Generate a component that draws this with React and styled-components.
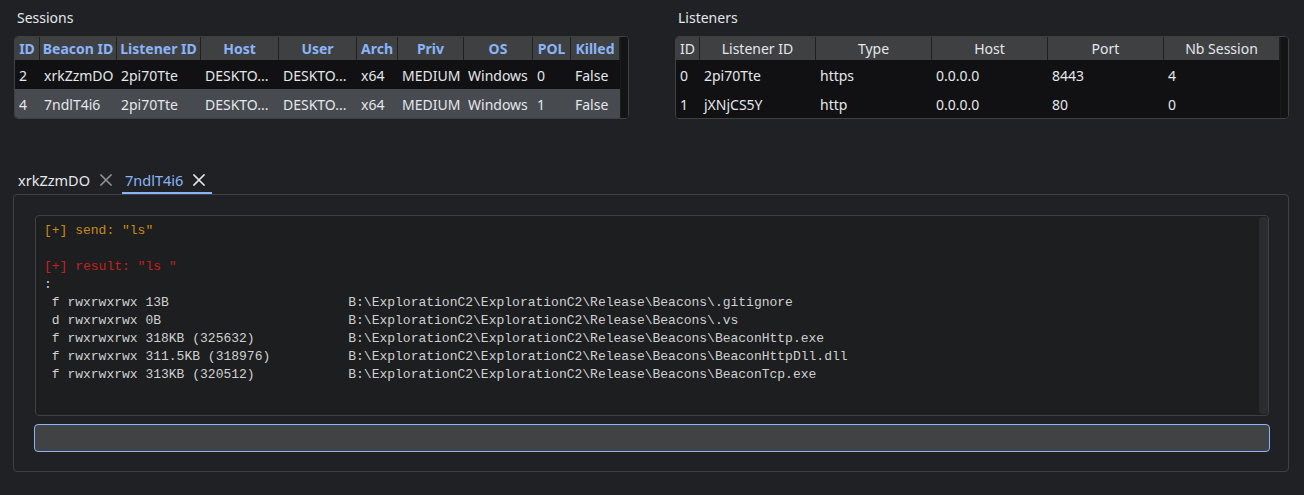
import React from "react";
import styled, { createGlobalStyle } from "styled-components";

const GlobalStyle = createGlobalStyle`
  html, body {
    margin: 0;
    padding: 0;
    background: #202124;
    color: #e4e7eb;
    font-family: "Noto Sans", "Open Sans", sans-serif;
  }
`;

const Page = styled.div`
  width: 1304px;
  height: 495px;
  background: #202124;
  box-sizing: border-box;
  overflow: hidden;
`;

const TopRow = styled.div`
  display: grid;
  grid-template-columns: 615px 614px;
  column-gap: 46px;
  padding: 0 15px 0 14px;
`;

const Panel = styled.section`
  display: flex;
  flex-direction: column;
`;

const PanelTitle = styled.div`
  font-size: 14px;
  line-height: 20px;
  margin: 8px 0 8px 3px;
  color: #e4e7eb;
`;

const TableBox = styled.div`
  border: 1px solid #3f4042;
  border-radius: 4px;
  overflow: hidden;
  display: grid;
  grid-template-columns: ${(p) => p.$cols};
  background: #111113;
`;

const HeadCell = styled.div`
  height: 23px;
  line-height: 23px;
  background: #3f4042;
  text-align: center;
  font-size: 14px;
  font-weight: ${(p) => (p.$hl ? 700 : 400)};
  color: ${(p) => (p.$hl ? "#8ab4f8" : "#e4e7eb")};
  border-right: 1px solid #202124;
  white-space: nowrap;
  overflow: hidden;
  &:last-of-type {
    border-right: none;
  }
`;

const Cell = styled.div`
  height: 29px;
  box-sizing: border-box;
  padding: 2px 2px 0 4px;
  line-height: 27px;
  font-size: 14px;
  white-space: nowrap;
  overflow: hidden;
  color: #e4e7eb;
  background: ${(p) => (p.$sel ? "#474a4f" : "#111113")};
`;

const ScrollTrack = styled.div`
  grid-row: 1 / span ${(p) => p.$rows};
  grid-column: -2 / -1;
  background: #141416;
  border-left: 1px solid #1a1b1d;
`;

const Tabs = styled.div`
  margin: 47px 15px 0 13px;
`;

const TabBar = styled.div`
  display: flex;
  align-items: stretch;
  height: 28px;
`;

const Tab = styled.div`
  display: flex;
  align-items: center;
  gap: 10px;
  padding: 0 7px 0 ${(p) => (p.$first ? 5 : 3)}px;
  margin-right: 3px;
  font-size: 14.5px;
  color: ${(p) => (p.$active ? "#8ab4f8" : "#e4e7eb")};
  box-shadow: ${(p) => (p.$active ? "inset 0 -2px 0 #8ab4f8" : "none")};
`;

const CloseIcon = ({ color }) => (
  <svg width="12" height="12" viewBox="0 0 12 12">
    <path d="M1 1 L11 11 M11 1 L1 11" stroke={color} strokeWidth="1.6" strokeLinecap="square" />
  </svg>
);

const Pane = styled.div`
  border: 1px solid #3f4042;
  border-radius: 4px;
  height: 278px;
  box-sizing: border-box;
  padding: 20px 18px 0 20px;
  display: flex;
  flex-direction: column;
  gap: 8px;
`;

const Console = styled.div`
  height: 201px;
  box-sizing: border-box;
  border: 1px solid #3f4042;
  border-radius: 4px;
  background: #1d1e20;
  display: flex;
  margin: 0 1px;
`;

const ConsoleText = styled.pre`
  flex: 1;
  margin: 0;
  padding: 6px 8px 4px;
  font-family: "Liberation Mono", "Courier New", monospace;
  font-size: 13px;
  line-height: 18px;
  color: #d0d0d0;
  overflow: hidden;
`;

const Line = styled.div`
  height: 18px;
  white-space: pre;
  color: ${(p) => p.$color || "#d0d0d0"};
`;

const ConsoleScroll = styled.div`
  width: 9px;
  margin: 1px 0 1px 0;
  border-radius: 4px;
  background: #2b2c2f;
`;

const CommandInput = styled.input`
  height: 28px;
  box-sizing: border-box;
  background: #414244;
  border: 1px solid #8ab4f8;
  border-radius: 4px;
  outline: none;
  color: #e4e7eb;
  font-family: "Liberation Mono", monospace;
  font-size: 13px;
  padding: 0 8px;
`;

const sessionCols = "25px 77px 84px 78px 78px 41px 66px 69px 38px 49px 8px";
const sessionHead = ["ID", "Beacon ID", "Listener ID", "Host", "User", "Arch", "Priv", "OS", "POL", "Killed"];
const sessions = [
  ["2", "xrkZzmDO", "2pi70Tte", "DESKTO...", "DESKTO...", "x64", "MEDIUM", "Windows", "0", "False"],
  ["4", "7ndlT4i6", "2pi70Tte", "DESKTO...", "DESKTO...", "x64", "MEDIUM", "Windows", "1", "False"],
];

const listenerCols = "24px 116px 116px 116px 116px 116px 8px";
const listenerHead = ["ID", "Listener ID", "Type", "Host", "Port", "Nb Session"];
const listeners = [
  ["0", "2pi70Tte", "https", "0.0.0.0", "8443", "4"],
  ["1", "jXNjCS5Y", "http", "0.0.0.0", "80", "0"],
];

const files = [
  ["f", "13B", ".gitignore"],
  ["d", "0B", ".vs"],
  ["f", "318KB (325632)", "BeaconHttp.exe"],
  ["f", "311.5KB (318976)", "BeaconHttpDll.dll"],
  ["f", "313KB (320512)", "BeaconTcp.exe"],
];

const Table = ({ cols, head, rows, highlight, selected }) => (
  <TableBox $cols={cols}>
    {head.map((h) => (
      <HeadCell key={h} $hl={highlight}>
        {h}
      </HeadCell>
    ))}
    <ScrollTrack $rows={rows.length + 1} />
    {rows.map((r, i) =>
      r.map((c, j) => (
        <Cell key={i + "-" + j} $sel={i === selected}>
          {c}
        </Cell>
      ))
    )}
  </TableBox>
);

export default function App() {
  return (
    <Page>
      <GlobalStyle />
      <TopRow>
        <Panel>
          <PanelTitle>Sessions</PanelTitle>
          <Table cols={sessionCols} head={sessionHead} rows={sessions} highlight selected={1} />
        </Panel>
        <Panel>
          <PanelTitle>Listeners</PanelTitle>
          <Table cols={listenerCols} head={listenerHead} rows={listeners} selected={-1} />
        </Panel>
      </TopRow>
      <Tabs>
        <TabBar>
          <Tab $first>
            xrkZzmDO
            <CloseIcon color="#8d8f93" />
          </Tab>
          <Tab $active>
            7ndlT4i6
            <CloseIcon color="#e4e7eb" />
          </Tab>
        </TabBar>
        <Pane>
          <Console>
            <ConsoleText>
              <Line $color="#c98a1c">[+] send: "ls"</Line>
              <Line />
              <Line $color="#c81e1e">[+] result: "ls "</Line>
              <Line>:</Line>
              {files.map(([t, size, name]) => (
                <Line key={name}>
                  {(" " + t + " rwxrwxrwx " + size).padEnd(39, " ") +
                    "B:\\ExplorationC2\\ExplorationC2\\Release\\Beacons\\" +
                    name}
                </Line>
              ))}
            </ConsoleText>
            <ConsoleScroll />
          </Console>
          <CommandInput />
        </Pane>
      </Tabs>
    </Page>
  );
}
